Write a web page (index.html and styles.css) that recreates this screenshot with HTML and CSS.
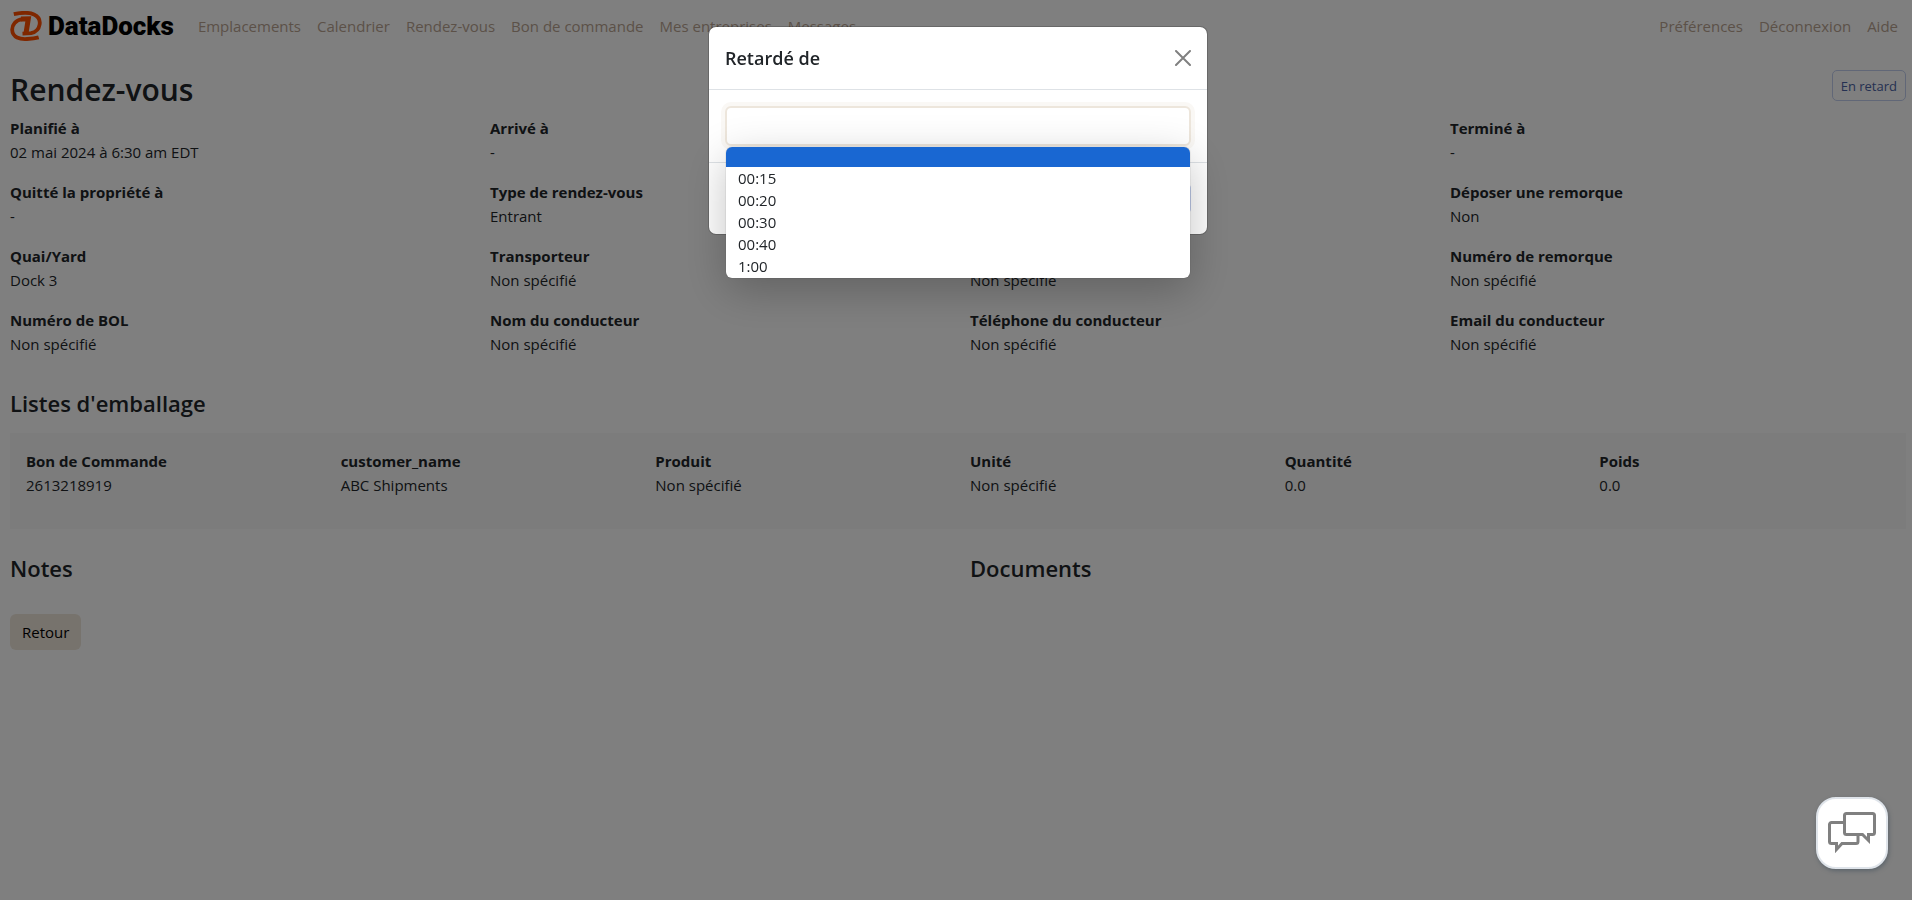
FILE: index.html
```html
<!DOCTYPE html>
<html lang="fr">
<head>
<meta charset="utf-8">
<title>DataDocks – Rendez-vous</title>
<link rel="stylesheet" href="styles.css">
</head>
<body>
<header class="navbar">
  <a class="brand" href="#">
    <svg class="brand-mark" viewBox="0 0 32 30" aria-hidden="true">
      <g fill="none" stroke="#ff4e00">
        <path d="M3.800 3.200C10 1.800 19 1.200 24 3.400C33 7.500 31 20 21 22.200L12.500 22.600" stroke-width="3.800"/>
        <path d="M12.500 8.200C5.500 9 2 14 2.200 19C2.500 26.500 10 28.500 17 28C22 27.800 26 27.200 28.700 26.400" stroke-width="3.800"/>
        <path d="M11 8L18.300 7.800L15.800 23.500" stroke-width="5"/>
      </g>
    </svg>
    <span class="brand-name">DataDocks</span>
  </a>
  <nav class="nav nav-main">
    <a href="#">Emplacements</a>
    <a href="#">Calendrier</a>
    <a href="#">Rendez-vous</a>
    <a href="#">Bon de commande</a>
    <a href="#">Mes entreprises</a>
    <a href="#">Messages</a>
  </nav>
  <nav class="nav">
    <a href="#">Préférences</a>
    <a href="#">Déconnexion</a>
    <a href="#">Aide</a>
  </nav>
</header>

<main class="page">
  <div class="page-head">
    <h1>Rendez-vous</h1>
    <button class="btn-outline" type="button">En retard</button>
  </div>

  <dl class="details">
    <div><dt>Planifié à</dt><dd>02 mai 2024 à 6:30 am EDT</dd></div>
    <div><dt>Arrivé à</dt><dd>-</dd></div>
    <div><dt>Commencé à</dt><dd>-</dd></div>
    <div><dt>Terminé à</dt><dd>-</dd></div>
    <div><dt>Quitté la propriété à</dt><dd>-</dd></div>
    <div><dt>Type de rendez-vous</dt><dd>Entrant</dd></div>
    <div><dt>Durée</dt><dd>-</dd></div>
    <div><dt>Déposer une remorque</dt><dd>Non</dd></div>
    <div><dt>Quai/Yard</dt><dd>Dock 3</dd></div>
    <div><dt>Transporteur</dt><dd>Non spécifié</dd></div>
    <div><dt>Expéditeur</dt><dd>Non spécifié</dd></div>
    <div><dt>Numéro de remorque</dt><dd>Non spécifié</dd></div>
    <div><dt>Numéro de BOL</dt><dd>Non spécifié</dd></div>
    <div><dt>Nom du conducteur</dt><dd>Non spécifié</dd></div>
    <div><dt>Téléphone du conducteur</dt><dd>Non spécifié</dd></div>
    <div><dt>Email du conducteur</dt><dd>Non spécifié</dd></div>
  </dl>

  <h2>Listes d'emballage</h2>
  <dl class="packing">
    <div><dt>Bon de Commande</dt><dd>2613218919</dd></div>
    <div><dt>customer_name</dt><dd>ABC Shipments</dd></div>
    <div><dt>Produit</dt><dd>Non spécifié</dd></div>
    <div><dt>Unité</dt><dd>Non spécifié</dd></div>
    <div><dt>Quantité</dt><dd>0.0</dd></div>
    <div><dt>Poids</dt><dd>0.0</dd></div>
  </dl>

  <div class="extras">
    <h2>Notes</h2>
    <h2>Documents</h2>
  </div>
  <button class="btn-back" type="button">Retour</button>
</main>

<div class="overlay">
  <section class="modal" role="dialog" aria-modal="true" aria-labelledby="delay-title">
    <header class="modal-header">
      <h3 id="delay-title">Retardé de</h3>
      <button class="close" type="button" aria-label="Fermer">
        <svg viewBox="0 0 16 16" aria-hidden="true"><path d="M1 1L15 15M15 1L1 15" stroke="#808080" stroke-width="2" stroke-linecap="round"/></svg>
      </button>
    </header>
    <div class="modal-body">
      <div class="picker">
        <select class="select" aria-labelledby="delay-title">
          <option></option>
          <option>00:15</option>
          <option>00:20</option>
          <option>00:30</option>
          <option>00:40</option>
          <option>1:00</option>
        </select>
        <ul class="menu" role="listbox" aria-labelledby="delay-title">
          <li class="active" role="option" aria-selected="true"></li>
          <li role="option">00:15</li>
          <li role="option">00:20</li>
          <li role="option">00:30</li>
          <li role="option">00:40</li>
          <li role="option">1:00</li>
        </ul>
      </div>
    </div>
    <footer class="modal-footer">
      <button class="btn-outline" type="button">Sauvegarder</button>
    </footer>
  </section>
</div>

<button class="chat" type="button" aria-label="Clavardage">
  <svg viewBox="0 0 48 42" aria-hidden="true">
    <g fill="#fff" stroke="#808080" stroke-width="3">
      <path d="M3.500 10.500H28a2 2 0 0 1 2 2V29.500a2 2 0 0 1-2 2H14L8.500 37.500V31.500H3.500a2 2 0 0 1-2-2V12.500a2 2 0 0 1 2-2Z"/>
      <path d="M18.500 1.500H44.500a2 2 0 0 1 2 2V20.500a2 2 0 0 1-2 2H40.500V28.500L34.500 22.500H18.500a2 2 0 0 1-2-2V3.500a2 2 0 0 1 2-2Z"/>
    </g>
  </svg>
</button>
</body>
</html>
```
FILE: styles.css
```css
* { box-sizing: border-box; }

body {
  margin: 0;
  min-height: 100vh;
  background: #fff;
  color: #212529;
  font: 15px/24px "Open Sans", "Noto Sans", sans-serif;
}

h1, h2, h3, dl, dd, ul { margin: 0; padding: 0; }
button, select { font: inherit; cursor: pointer; }

.navbar {
  display: flex;
  align-items: center;
  height: 52px;
  padding: 0 14px 0 10px;
}
.brand {
  display: flex;
  align-items: center;
  gap: 6px;
  margin-right: 24px;
  color: #000;
  text-decoration: none;
}
.brand-mark { width: 32px; height: 30px; }
.brand-name { font: 900 26px/30px Roboto, sans-serif; }
.nav { display: flex; gap: 16px; }
.nav-main { flex: 1; }
.nav a { color: #b8a391; text-decoration: none; }

.page { padding: 18px 6px 0 10px; }
.page-head {
  display: flex;
  justify-content: space-between;
  align-items: flex-start;
  margin-bottom: 6px;
}
h1 { font-size: 30px; line-height: 40px; font-weight: 600; }
h2 { font-size: 22px; line-height: 30px; font-weight: 600; }
dt { font-weight: 700; }

.btn-outline {
  height: 31px;
  padding: 0 8px;
  border: 1px solid #c2cfee;
  border-radius: 5px;
  background: transparent;
  color: #4a62a4;
  font-size: 13px;
  line-height: 20px;
}

.details {
  display: grid;
  grid-template-columns: repeat(4, 1fr);
  gap: 16px 24px;
  margin-bottom: 32px;
}
.packing {
  display: grid;
  grid-template-columns: repeat(6, 1fr);
  gap: 24px;
  margin: 15px 0 24px;
  padding: 16px 16px 32px;
  background: #f8f8f8;
}
.extras {
  display: grid;
  grid-template-columns: repeat(2, 1fr);
  gap: 24px;
  margin-bottom: 31px;
}
.btn-back {
  height: 36px;
  padding: 0 12px;
  border: 0;
  border-radius: 6px;
  background: #efe6da;
  color: #000;
}

.overlay {
  position: fixed;
  inset: 0;
  display: flex;
  justify-content: center;
  align-items: flex-start;
  padding: 26px 0 0 4px;
  background: rgba(0, 0, 0, 0.5);
}
.modal {
  width: 500px;
  border: 1px solid rgba(0, 0, 0, 0.18);
  border-radius: 8px;
  background: #fff;
  background-clip: padding-box;
}
.modal-header {
  display: flex;
  justify-content: space-between;
  align-items: center;
  padding: 16px;
  border-bottom: 1px solid #dee2e6;
}
.modal-header h3 { font-size: 18px; line-height: 30px; font-weight: 600; }
.close {
  display: flex;
  padding: 0;
  border: 0;
  background: none;
}
.close svg { width: 16px; height: 16px; }
.modal-body { padding: 16px; }
.picker { position: relative; }
.select {
  display: block;
  width: 100%;
  height: 40px;
  padding: 0 12px;
  border: 2px solid #ede6dc;
  border-radius: 6px;
  background: #fff;
  box-shadow: 0 0 0 4px #faf8f5;
  appearance: none;
  outline: 0;
}
.menu {
  position: absolute;
  top: 41px;
  left: 1px;
  right: 1px;
  overflow: hidden;
  padding-bottom: 1px;
  border-radius: 6px;
  background: #fff;
  box-shadow: 0 0 1px rgba(0, 0, 0, 0.5), 0 12px 44px rgba(0, 0, 0, 0.24);
  list-style: none;
}
.menu li { height: 22px; padding: 0 12px; line-height: 22px; }
.menu .active { height: 20px; background: #1967d2; }
.modal-footer {
  display: flex;
  justify-content: flex-end;
  padding: 20px 16px;
  border-top: 1px solid #dee2e6;
}

.chat {
  position: fixed;
  right: 24px;
  bottom: 31px;
  display: flex;
  justify-content: center;
  align-items: center;
  width: 72px;
  height: 72px;
  padding: 0;
  border: 2px solid #dfe4ea;
  border-radius: 20px;
  background: #fff;
  box-shadow: 1px 2px 4px rgba(60, 75, 90, 0.5);
}
.chat svg { width: 48px; height: 42px; }
```
